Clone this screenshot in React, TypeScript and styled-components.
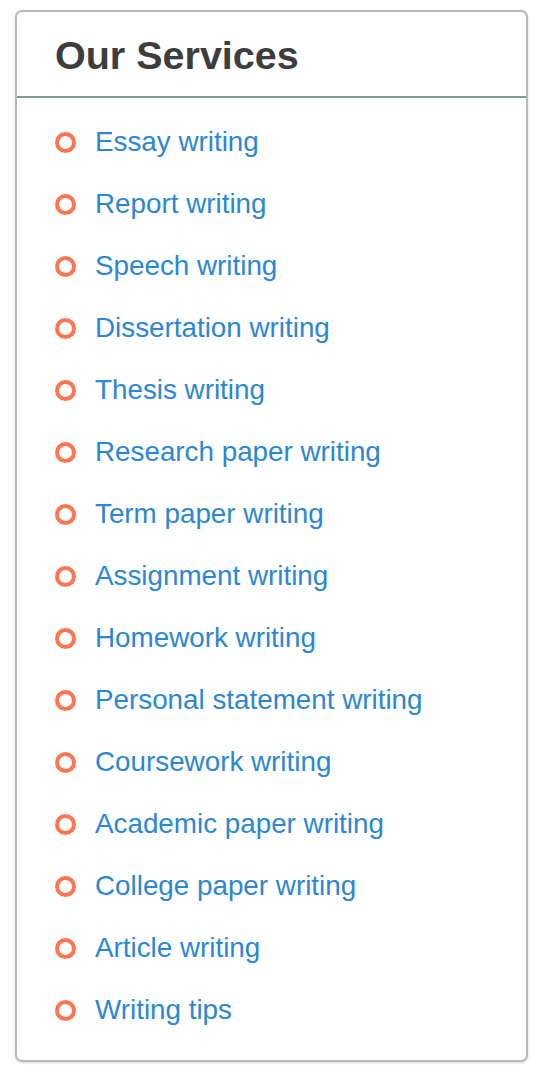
import React from "react";
import styled, { createGlobalStyle } from "styled-components";

const Global = createGlobalStyle`
  html, body { margin: 0; padding: 0; background: #ffffff; }
  body { font-family: "Liberation Sans", Arial, Helvetica, sans-serif; }
`;

const Page = styled.div`
  padding: 10px 16px 12px 15px;
`;

const Card = styled.section`
  background: #fff;
  border: 2px solid #b9b9b9;
  border-radius: 7px;
  box-shadow: 0 1px 3px rgba(0, 0, 0, 0.15);
  overflow: hidden;
`;

const Header = styled.header`
  padding: 21px 38px 19px 38px;
  border-bottom: 2px solid #7f9b95;
`;

const Title = styled.h2`
  margin: 0;
  font-family: "Liberation Sans", Arial, Helvetica, sans-serif;
  font-weight: 700;
  font-size: 39.5px;
  line-height: 44px;
  color: #3d3d3d;
`;

const List = styled.ul`
  list-style: none;
  margin: 0;
  padding: 13px 38px 19px 38px;
`;

const Item = styled.li`
  display: flex;
  align-items: center;
  gap: 19px;
  height: 62px;
`;

const Bullet = styled.span`
  box-sizing: border-box;
  width: 21px;
  height: 21px;
  border-radius: 50%;
  border: 4px solid #ff7452;
  flex: none;
`;

const Link = styled.a`
  font-size: 27.8px;
  line-height: 62px;
  color: #2b87d3;
  text-decoration: none;
  white-space: nowrap;
`;

const services = [
  "Essay writing",
  "Report writing",
  "Speech writing",
  "Dissertation writing",
  "Thesis writing",
  "Research paper writing",
  "Term paper writing",
  "Assignment writing",
  "Homework writing",
  "Personal statement writing",
  "Coursework writing",
  "Academic paper writing",
  "College paper writing",
  "Article writing",
  "Writing tips",
];

export default function App() {
  return (
    <Page>
      <Global />
      <Card>
        <Header>
          <Title>Our Services</Title>
        </Header>
        <List>
          {services.map((s) => (
            <Item key={s}>
              <Bullet />
              <Link href="#">{s}</Link>
            </Item>
          ))}
        </List>
      </Card>
    </Page>
  );
}
